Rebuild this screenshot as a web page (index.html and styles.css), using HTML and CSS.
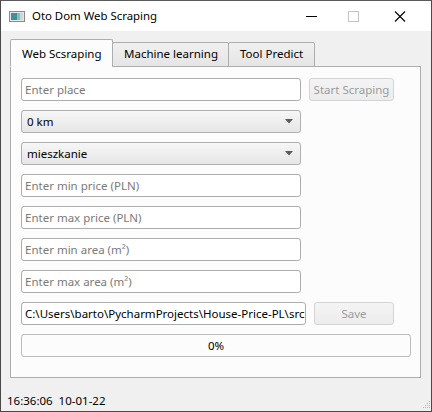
FILE: index.html
```html
<!DOCTYPE html>
<html>
<head>
<meta charset="utf-8">
<link rel="stylesheet" href="styles.css">
</head>
<body>
<div class="window">
  <div class="titlebar">
    <svg class="app-icon" width="16" height="11" viewBox="0 0 16 11">
      <rect x="0.5" y="0.5" width="15" height="10" fill="#e8e8e8" stroke="#8a8a8a"/>
      <rect x="2" y="2" width="6" height="7" fill="#3f8fa0"/>
      <rect x="8" y="2" width="3" height="7" fill="#7fc4b0"/>
      <rect x="11" y="2" width="3" height="7" fill="#c9d7dd"/>
    </svg>
    <span class="title">Oto Dom Web Scraping</span>
    <div class="controls">
      <svg class="ctl" width="46" height="31" viewBox="0 0 46 31"><line x1="13" y1="15.5" x2="24" y2="15.5" stroke="#000" stroke-width="1"/></svg>
      <svg class="ctl" width="46" height="31" viewBox="0 0 46 31"><rect x="9.5" y="10.5" width="10" height="10" fill="none" stroke="#c4c4c4" stroke-width="1"/></svg>
      <svg class="ctl" width="46" height="31" viewBox="0 0 46 31"><path d="M10 10.5 L20 20.5 M20 10.5 L10 20.5" stroke="#000" stroke-width="1.1" fill="none"/></svg>
    </div>
  </div>
  <div class="client">
    <div class="tabs">
      <div class="tab active">Web Scsraping</div>
      <div class="tab t2">Machine learning</div>
      <div class="tab t3">Tool Predict</div>
    </div>
    <div class="panel">
      <div class="row">
        <div class="input wide placeholder">Enter place</div>
        <div class="button start">Start Scraping</div>
      </div>
      <div class="combo wide"><span>0 km</span><svg width="8" height="5" viewBox="0 0 8 5"><path d="M0 0 H8 L4 4.5 Z" fill="#5a5a5a"/></svg></div>
      <div class="combo wide"><span>mieszkanie</span><svg width="8" height="5" viewBox="0 0 8 5"><path d="M0 0 H8 L4 4.5 Z" fill="#5a5a5a"/></svg></div>
      <div class="input wide placeholder">Enter min price (PLN)</div>
      <div class="input wide placeholder">Enter max price (PLN)</div>
      <div class="input wide placeholder">Enter min area (m²)</div>
      <div class="input wide placeholder">Enter max area (m²)</div>
      <div class="row">
        <div class="input path">C:\Users\barto\PycharmProjects\House-Price-PL\src</div>
        <div class="button save">Save</div>
      </div>
      <div class="progress">0%</div>
    </div>
    <div class="status">16:36:06&nbsp; 10-01-22</div>
    <svg class="grip" width="10" height="10" viewBox="0 0 10 10">
      <g fill="#b8b8b8">
        <rect x="8" y="0" width="1" height="1"/>
        <rect x="6" y="2" width="1" height="1"/><rect x="8" y="2" width="1" height="1"/>
        <rect x="4" y="4" width="1" height="1"/><rect x="6" y="4" width="1" height="1"/><rect x="8" y="4" width="1" height="1"/>
        <rect x="2" y="6" width="1" height="1"/><rect x="4" y="6" width="1" height="1"/><rect x="6" y="6" width="1" height="1"/><rect x="8" y="6" width="1" height="1"/>
      </g>
    </svg>
  </div>
</div>
</body>
</html>
```
FILE: styles.css
```css
* { box-sizing: border-box; }
html, body { margin: 0; padding: 0; }
body {
  width: 432px;
  height: 412px;
  font-family: "Noto Sans", "Open Sans", sans-serif;
  font-size: 11.5px;
  color: #000;
  overflow: hidden;
}
.window {
  width: 432px;
  height: 412px;
  border: 1px solid #4a4a4a;
  border-top-color: #5a5a5a;
  display: flex;
  flex-direction: column;
  background: #f0f0f0;
}
.titlebar {
  height: 30px;
  background: #fff;
  display: flex;
  align-items: center;
  flex: none;
}
.app-icon { margin-left: 8px; }
.title { margin-left: 7px; font-size: 11.4px; line-height: 14px; margin-top: -1px; }
.controls { margin-left: auto; display: flex; }
.ctl { display: block; }
.client {
  flex: 1;
  position: relative;
  padding: 8px 10px 0 9px;
  display: flex;
  flex-direction: column;
}
.tabs {
  display: flex;
  align-items: flex-end;
  height: 28px;
  position: relative;
  z-index: 1;
  margin-bottom: -1px;
}
.tab {
  height: 25px;
  border: 1px solid #adadad;
  border-radius: 2px 2px 0 0;
  background: linear-gradient(#f0f0f0, #e5e5e5);
  padding: 0 0 0 11px;
  line-height: 22px;
  margin-left: -1px;
  white-space: nowrap;
  overflow: hidden;
}
.tab.active {
  height: 28px;
  margin-left: 0;
  background: #fcfcfc;
  border-bottom: 1px solid #fcfcfc;
  padding-left: 11px;
  line-height: 27px;
  width: 103px;
}
.tab.t2 { width: 117px; }
.tab.t3 { width: 87px; }
.panel {
  width: 411px;
  height: 312px;
  border: 1px solid #adadad;
  background: #fcfcfc;
  padding: 11px 10px 0 10px;
  display: flex;
  flex-direction: column;
  gap: 9px;
}
.row { display: flex; gap: 8px; }
.input, .combo, .button, .progress {
  height: 23px;
  border-radius: 3px;
  line-height: 22px;
  white-space: nowrap;
  overflow: hidden;
  flex: none;
}
.input {
  border: 1px solid #adadad;
  background: #fff;
  padding: 0 3px;
}
.wide { width: 280px; }
.path { width: 285px; padding-right: 0; }
.placeholder { color: #7a7a7a; }
.combo {
  border: 1px solid #b0b0b0;
  background: linear-gradient(#f6f6f6, #e6e6e6);
  padding: 0 7px 0 5px;
  display: flex;
  align-items: center;
  justify-content: space-between;
}
.button {
  border: 1px solid #d4d4d4;
  background: linear-gradient(#f4f4f4, #ececec);
  color: #9c9c9c;
  text-align: center;
}
.start { width: 85px; }
.save { width: 80px; }
.progress {
  width: 390px;
  border: 1px solid #bcbcbc;
  background: #fcfcfc;
  text-align: center;
}
.status {
  margin-top: 16px;
  margin-left: -3px;
  line-height: 14px;
  font-size: 11.5px;
}
.grip { position: absolute; right: 0; bottom: 0; }
```
